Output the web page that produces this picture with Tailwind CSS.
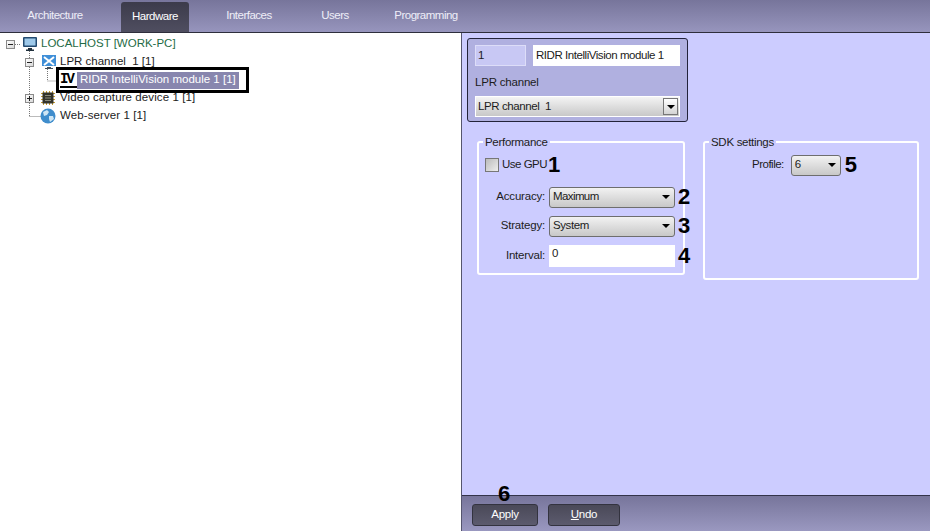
<!DOCTYPE html>
<html lang="en">
<head>
    <meta charset="UTF-8">
    <title>Hardware</title>
    <script src="https://cdn.jsdelivr.net/npm/@tailwindcss/browser@4"></script>
</head>
<body class="bg-white">
    <div class="relative w-[930px] h-[531px] overflow-hidden flex flex-col font-['Liberation_Sans',sans-serif] text-[11.5px] text-[#1c1c1c]">
        <!-- Top tabs -->
        <div class="h-[33px] shrink-0 flex pl-[6px] bg-gradient-to-b from-[#77759b] to-[#9795bd] border-b border-[#2e2e3c] text-[#eeeef8] tracking-[-0.5px]">
            <div class="w-[98px] h-[32px] flex items-center justify-center">Architecture</div>
            <div class="w-[68px] h-[30px] mt-[2px] ml-[17px] flex items-center justify-center rounded-t-[3px] bg-gradient-to-b from-[#3c3b4b] to-[#4f4e60] text-white">Hardware</div>
            <div class="w-[84px] h-[32px] ml-[18px] flex items-center justify-center">Interfaces</div>
            <div class="w-[42px] h-[32px] ml-[23px] flex items-center justify-center">Users</div>
            <div class="w-[62px] h-[32px] ml-[39px] flex items-center justify-center whitespace-nowrap">Programming</div>
        </div>

        <div class="flex flex-1 min-h-0">
            <!-- Tree -->
            <div class="relative w-[461px] shrink-0 pt-[2px] bg-white">
                <svg class="absolute left-0 top-0" width="60" height="100" fill="none" stroke="#777" stroke-dasharray="1 1">
                    <path d="M15 11.500h6M29.500 18V83M29.500 83.500h11M47.500 36V48h10"/>
                </svg>
                <div class="h-[18px] pl-[6px] flex items-center">
                    <span class="relative w-[9px] h-[9px] border border-[#8a8a8a] bg-gradient-to-br from-white to-[#d8d8d8] flex items-center justify-center"><span class="w-[5px] h-px bg-[#222]"></span></span>
                    <svg class="ml-[7px]" width="16" height="16" viewBox="0 0 16 16"><rect x="1" y="1" width="14" height="10" rx="1" fill="#234a70"/><rect x="2.500" y="2.500" width="11" height="7" fill="#9ec9ea"/><path d="M6 12h4v1.500h2V15H4v-1.500h2z" fill="#20303c"/></svg>
                    <span class="ml-[3px] text-[#1f6b46]">LOCALHOST [WORK-PC]</span>
                </div>
                <div class="h-[18px] pl-[25px] flex items-center">
                    <span class="relative w-[9px] h-[9px] border border-[#8a8a8a] bg-gradient-to-br from-white to-[#d8d8d8] flex items-center justify-center"><span class="w-[5px] h-px bg-[#222]"></span></span>
                    <svg class="ml-[7px]" width="16" height="16" viewBox="0 0 16 16"><rect x="1" y="1" width="14" height="11" fill="#3f8fd8"/><path d="M3 3l10 8M13 3L3 11" stroke="#fff" stroke-width="2"/><path d="M6 13h4v1h2v1H4v-1h2z" fill="#44505c"/></svg>
                    <span class="ml-[3px]">LPR channel&nbsp; 1 [1]</span>
                </div>
                <div class="h-[18px] pl-[56px] flex items-center">
                    <!-- black annotation frame round the selected node -->
                    <div class="h-[26px] -my-[4px] w-[193px] border-[3px] border-black bg-white flex items-center pl-[1px] relative z-10">
                        <span class="w-[17px] font-['Liberation_Mono',monospace] font-bold text-[14px] leading-[14px] tracking-[-2px] text-black border-b-2 border-black">IV</span>
                        <span class="h-[17px] px-[3px] flex items-center bg-[#8886ae] text-white whitespace-nowrap">RIDR IntelliVision module 1 [1]</span>
                    </div>
                </div>
                <div class="h-[18px] pl-[25px] flex items-center">
                    <span class="relative w-[9px] h-[9px] border border-[#8a8a8a] bg-gradient-to-br from-white to-[#d8d8d8] flex items-center justify-center"><span class="w-[5px] h-px bg-[#222]"></span><span class="absolute w-px h-[5px] bg-[#222]"></span></span>
                    <svg class="ml-[6px]" width="16" height="16" viewBox="0 0 16 16"><path d="M1 3.500h14M1 6.500h14M1 9.500h14M1 12.500h14M3.500 1v14M6.500 1v14M9.500 1v14M12.500 1v14" stroke="#c59a2c"/><rect x="2.500" y="2.500" width="11" height="11" fill="#34342c"/><path d="M5 5.500h6M5 8h6M5 10.500h6" stroke="#8a8a78"/></svg>
                    <span class="ml-[4px] tracking-[0.1px]">Video capture device 1 [1]</span>
                </div>
                <div class="h-[18px] pl-[40px] flex items-center">
                    <svg width="16" height="16" viewBox="0 0 16 16"><circle cx="8" cy="8" r="7.500" fill="#3f8dcc"/><path d="M3 4l4-2 2 2-2 3-3 1zM9 8l4 0 1 3-4 3-1-3z" fill="#cfe6f4"/></svg>
                    <span class="ml-[4px] tracking-[0.1px]">Web-server 1 [1]</span>
                </div>
            </div>

            <!-- Settings -->
            <div class="flex-1 flex flex-col border-l border-[#55556e] bg-[#ccccff]">
                <div class="flex-1 pl-[5px] pt-[5px] relative">
                    <div class="w-[221px] h-[84px] rounded-[3px] border border-[#23233a] bg-[#b0b0e0] pt-[6px] px-[7px]">
                        <div class="flex gap-[7px]">
                            <div class="w-[51px] h-[21px] border border-[#ddddf8] bg-[#c8c8f4] pl-[2px] flex items-center">1</div>
                            <div class="w-[147px] h-[21px] bg-white pl-[3px] flex items-center whitespace-nowrap tracking-[-0.45px]">RIDR IntelliVision module 1</div>
                        </div>
                        <div class="mt-[9px] h-[14px] leading-[14px] tracking-[-0.2px]">LPR channel</div>
                        <div class="mt-[7px] h-[21px] w-[205px] border border-white bg-gradient-to-b from-[#f4f4f4] to-[#c8c8c8] pl-[2px] flex items-center justify-between">
                            <span class="tracking-[-0.4px]">LPR channel&nbsp; 1</span>
                            <span class="w-[15px] h-[17px] mr-px border border-[#777] bg-gradient-to-b from-white to-[#d4d4d4] flex items-center justify-center"><span class="border-x-[4px] border-x-transparent border-t-[4px] border-t-black"></span></span>
                        </div>
                    </div>

                    <div class="flex mt-[13px] ml-[10px]">
                        <fieldset class="w-[208px] min-w-0 h-[140px] border-2 border-white rounded-[3px] pl-[6px]">
                            <legend class="px-[2px] -ml-[2px] leading-[14px] tracking-[-0.3px]">Performance</legend>
                            <div class="flex items-center mt-[7px] h-[18px]">
                                <span class="w-[14px] h-[14px] border border-[#777] bg-gradient-to-br from-[#bbb] to-[#eee]"></span>
                                <span class="ml-[3px] tracking-[-0.5px]">Use GPU</span>
                                <span class="ml-[1px] text-[22px] leading-none font-bold text-black">1</span>
                            </div>
                            <div class="flex items-center mt-[12px] h-[22px]">
                                <span class="w-[60px] shrink-0 text-right tracking-[-0.2px]">Accuracy:</span>
                                <div class="ml-[4px] w-[126px] h-[21px] shrink-0 rounded-[3px] border border-[#6e6e6e] bg-gradient-to-b from-[#f2f2f2] to-[#c8c8c8] pl-[3px] flex items-center justify-between pr-[4px]"><span class="tracking-[-0.6px]">Maximum</span><span class="border-x-[4px] border-x-transparent border-t-[4px] border-t-black"></span></div>
                                <span class="ml-[3px] text-[22px] leading-none font-bold text-black">2</span>
                            </div>
                            <div class="flex items-center mt-[7px] h-[22px]">
                                <span class="w-[60px] shrink-0 text-right tracking-[-0.2px]">Strategy:</span>
                                <div class="ml-[4px] w-[126px] h-[21px] shrink-0 rounded-[3px] border border-[#6e6e6e] bg-gradient-to-b from-[#f2f2f2] to-[#c8c8c8] pl-[3px] flex items-center justify-between pr-[4px]"><span class="tracking-[-0.4px]">System</span><span class="border-x-[4px] border-x-transparent border-t-[4px] border-t-black"></span></div>
                                <span class="ml-[3px] text-[22px] leading-none font-bold text-black">3</span>
                            </div>
                            <div class="flex items-center mt-[8px] h-[22px]">
                                <span class="w-[60px] shrink-0 text-right tracking-[-0.2px]">Interval:</span>
                                <div class="ml-[4px] w-[126px] h-[22px] shrink-0 bg-white pl-[3px] pb-[4px] flex items-center">0</div>
                                <span class="ml-[3px] text-[22px] leading-none font-bold text-black">4</span>
                            </div>
                        </fieldset>
                        <fieldset class="ml-[18px] w-[216px] min-w-0 h-[145px] border-2 border-white rounded-[3px]">
                            <legend class="px-[2px] ml-[4px] leading-[14px] tracking-[-0.3px]">SDK settings</legend>
                            <div class="flex items-center mt-[5px] h-[22px] ml-[47px]">
                                <span class="tracking-[-0.5px]">Profile:</span>
                                <div class="ml-[7px] w-[50px] h-[21px] rounded-[3px] border border-[#6e6e6e] bg-gradient-to-b from-[#f2f2f2] to-[#c8c8c8] pl-[3px] flex items-center justify-between pr-[4px]"><span>6</span><span class="border-x-[4px] border-x-transparent border-t-[4px] border-t-black"></span></div>
                                <span class="ml-[4px] text-[22px] leading-none font-bold text-black">5</span>
                            </div>
                        </fieldset>
                    </div>
                </div>

                <!-- Bottom buttons -->
                <div class="h-[36px] shrink-0 relative flex gap-[10px] pl-[10px] pt-[8px] border-t border-[#33334a] bg-gradient-to-b from-[#77759b] to-[#9a98c0]">
                    <span class="absolute left-[36px] -top-[13px] text-[22px] leading-none font-bold text-black">6</span>
                    <div class="w-[66px] h-[22px] rounded-[3px] border border-[#33333f] bg-gradient-to-b from-[#4a4958] to-[#5c5b6e] text-white flex items-center justify-center tracking-[-0.3px]">Apply</div>
                    <div class="w-[72px] h-[22px] rounded-[3px] border border-[#33333f] bg-gradient-to-b from-[#4a4958] to-[#5c5b6e] text-white flex items-center justify-center tracking-[-0.3px]"><span class="underline">U</span>ndo</div>
                </div>
            </div>
        </div>
    </div>
</body>
</html>
